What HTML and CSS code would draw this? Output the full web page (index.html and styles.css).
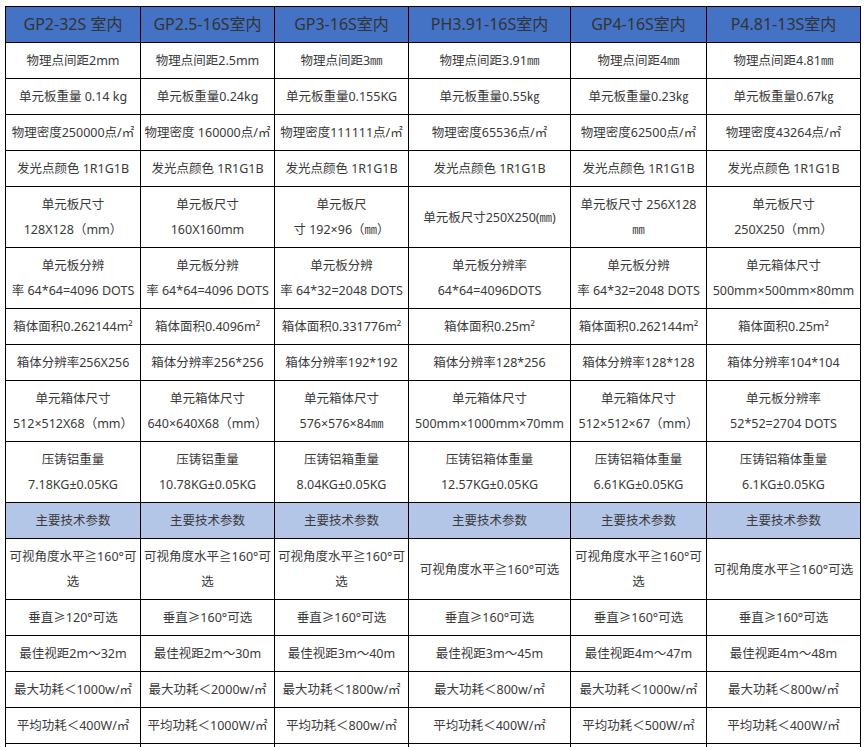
FILE: index.html
```html
<!DOCTYPE html>
<html lang="zh-CN">
<head>
<meta charset="utf-8">
<title>LED 模组参数</title>
<link rel="stylesheet" href="styles.css">
</head>
<body>
<table class="spec">
  <colgroup>
    <col class="c1"><col class="c2"><col class="c3"><col class="c4"><col class="c5"><col class="c6">
  </colgroup>
  <thead>
    <tr class="head">
      <th>GP2-32S 室内</th>
      <th>GP2.5-16S室内</th>
      <th>GP3-16S室内</th>
      <th>PH3.91-16S室内</th>
      <th>GP4-16S室内</th>
      <th>P4.81-13S室内</th>
    </tr>
  </thead>
  <tbody>
    <tr>
      <td>物理点间距2mm</td>
      <td>物理点间距2.5mm</td>
      <td>物理点间距3㎜</td>
      <td>物理点间距3.91㎜</td>
      <td>物理点间距4㎜</td>
      <td>物理点间距4.81㎜</td>
    </tr>
    <tr>
      <td>单元板重量 0.14 kg</td>
      <td>单元板重量0.24kg</td>
      <td>单元板重量0.155KG</td>
      <td>单元板重量0.55㎏</td>
      <td>单元板重量0.23㎏</td>
      <td>单元板重量0.67㎏</td>
    </tr>
    <tr>
      <td>物理密度250000点/㎡</td>
      <td>物理密度 160000点/㎡</td>
      <td>物理密度111111点/㎡</td>
      <td>物理密度65536点/㎡</td>
      <td>物理密度62500点/㎡</td>
      <td>物理密度43264点/㎡</td>
    </tr>
    <tr>
      <td>发光点颜色 1R1G1B</td>
      <td>发光点颜色 1R1G1B</td>
      <td>发光点颜色 1R1G1B</td>
      <td>发光点颜色 1R1G1B</td>
      <td>发光点颜色 1R1G1B</td>
      <td>发光点颜色 1R1G1B</td>
    </tr>
    <tr>
      <td>单元板尺寸<br>128X128（mm）</td>
      <td>单元板尺寸<br>160X160mm</td>
      <td>单元板尺<br>寸 192×96（㎜）</td>
      <td>单元板尺寸250X250(㎜)</td>
      <td>单元板尺寸 256X128<br>㎜</td>
      <td>单元板尺寸<br>250X250（mm）</td>
    </tr>
    <tr>
      <td>单元板分辨<br>率 64*64=4096 DOTS</td>
      <td>单元板分辨<br>率 64*64=4096 DOTS</td>
      <td>单元板分辨<br>率 64*32=2048 DOTS</td>
      <td>单元板分辨率<br>64*64=4096DOTS</td>
      <td>单元板分辨<br>率 64*32=2048 DOTS</td>
      <td>单元箱体尺寸<br>500mm×500mm×80mm</td>
    </tr>
    <tr>
      <td>箱体面积0.262144m²</td>
      <td>箱体面积0.4096m²</td>
      <td>箱体面积0.331776m²</td>
      <td>箱体面积0.25m²</td>
      <td>箱体面积0.262144m²</td>
      <td>箱体面积0.25m²</td>
    </tr>
    <tr>
      <td>箱体分辨率256X256</td>
      <td>箱体分辨率256*256</td>
      <td>箱体分辨率192*192</td>
      <td>箱体分辨率128*256</td>
      <td>箱体分辨率128*128</td>
      <td>箱体分辨率104*104</td>
    </tr>
    <tr>
      <td>单元箱体尺寸<br>512×512X68（mm）</td>
      <td>单元箱体尺寸<br>640×640X68（mm）</td>
      <td>单元箱体尺寸<br>576×576×84㎜</td>
      <td>单元箱体尺寸<br>500mm×1000mm×70mm</td>
      <td>单元箱体尺寸<br>512×512×67（mm）</td>
      <td>单元板分辨率<br>52*52=2704 DOTS</td>
    </tr>
    <tr>
      <td>压铸铝重量<br>7.18KG±0.05KG</td>
      <td>压铸铝重量<br>10.78KG±0.05KG</td>
      <td>压铸铝箱重量<br>8.04KG±0.05KG</td>
      <td>压铸铝箱体重量<br>12.57KG±0.05KG</td>
      <td>压铸铝箱体重量<br>6.61KG±0.05KG</td>
      <td>压铸铝箱体重量<br>6.1KG±0.05KG</td>
    </tr>
    <tr class="section">
      <td>主要技术参数</td>
      <td>主要技术参数</td>
      <td>主要技术参数</td>
      <td>主要技术参数</td>
      <td>主要技术参数</td>
      <td>主要技术参数</td>
    </tr>
    <tr>
      <td>可视角度水平≧160°可<br>选</td>
      <td>可视角度水平≧160°可<br>选</td>
      <td>可视角度水平≧160°可<br>选</td>
      <td>可视角度水平≧160°可选</td>
      <td>可视角度水平≧160°可<br>选</td>
      <td>可视角度水平≧160°可选</td>
    </tr>
    <tr>
      <td>垂直≥120°可选</td>
      <td>垂直≥160°可选</td>
      <td>垂直≥160°可选</td>
      <td>垂直≥160°可选</td>
      <td>垂直≥160°可选</td>
      <td>垂直≥160°可选</td>
    </tr>
    <tr>
      <td>最佳视距2m～32m</td>
      <td>最佳视距2m～30m</td>
      <td>最佳视距3m～40m</td>
      <td>最佳视距3m～45m</td>
      <td>最佳视距4m～47m</td>
      <td>最佳视距4m～48m</td>
    </tr>
    <tr>
      <td>最大功耗＜1000w/㎡</td>
      <td>最大功耗＜2000w/㎡</td>
      <td>最大功耗＜1800w/㎡</td>
      <td>最大功耗＜800w/㎡</td>
      <td>最大功耗＜1000w/㎡</td>
      <td>最大功耗＜800w/㎡</td>
    </tr>
    <tr>
      <td>平均功耗＜400W/㎡</td>
      <td>平均功耗＜1000W/㎡</td>
      <td>平均功耗＜800w/㎡</td>
      <td>平均功耗＜400W/㎡</td>
      <td>平均功耗＜500W/㎡</td>
      <td>平均功耗＜400W/㎡</td>
    </tr>
    <tr class="tail">
      <td></td>
      <td></td>
      <td></td>
      <td></td>
      <td></td>
      <td></td>
    </tr>
  </tbody>
</table>
</body>
</html>
```
FILE: styles.css
```css
html, body {
  background: #ffffff;
}
body {
  margin: 6px 0 0 5px;
  font-family: "Noto Sans", "Noto Sans CJK SC", sans-serif;
  color: #3a3a3a;
}
.spec {
  border-collapse: collapse;
  table-layout: fixed;
  width: 855px;
}
.c1 { width: 135px; }
.c2 { width: 134px; }
.c3 { width: 134px; }
.c4 { width: 162px; }
.c5 { width: 136px; }
.c6 { width: 154px; }
.spec th,
.spec td {
  border: 1px solid #000000;
  text-align: center;
  vertical-align: middle;
  white-space: nowrap;
  overflow: visible;
  padding: 5px 0;
  line-height: 25px;
}
.spec td {
  font-size: 12.5px;
}
.spec th {
  font-weight: normal;
  font-size: 16px;
  background: #4472c4;
  color: #333333;
}
.section td {
  background: #b4c6e7;
}
.tail td {
  height: 25px;
}
```
